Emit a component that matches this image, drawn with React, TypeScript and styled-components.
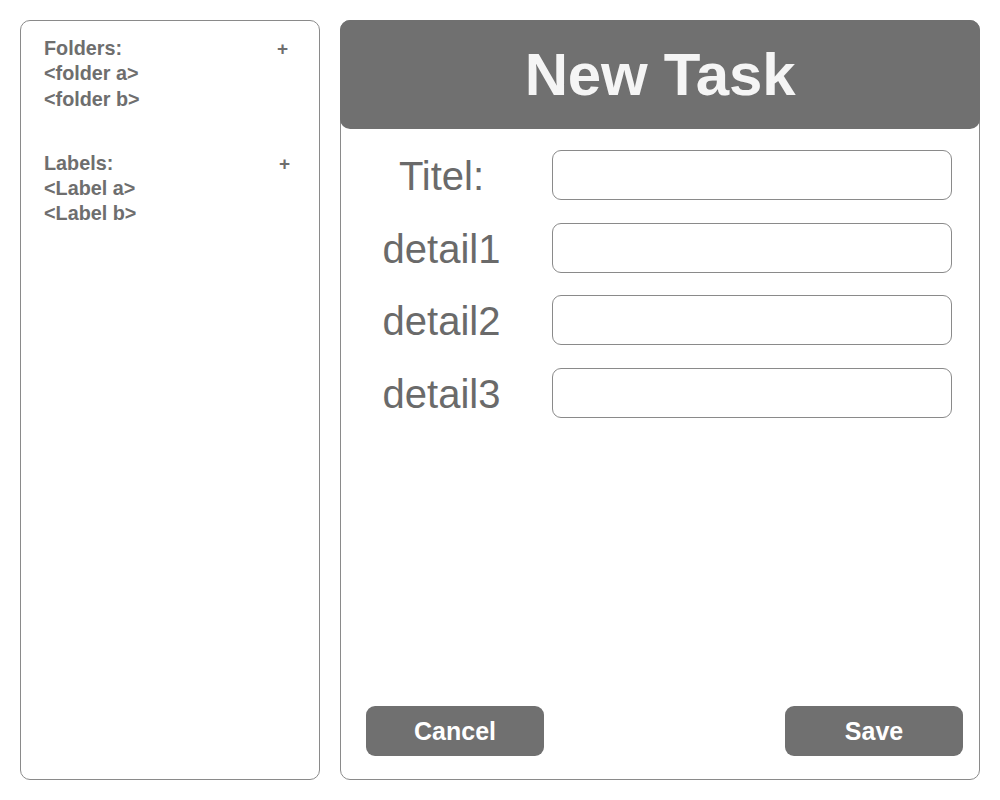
import React from "react";
import styled, { createGlobalStyle } from "styled-components";

const Global = createGlobalStyle`
  html, body { margin: 0; padding: 0; background: #ffffff; }
  body { font-family: "Liberation Sans", Arial, Helvetica, sans-serif; }
  * { box-sizing: border-box; }
`;

const Page = styled.div`
  width: 1000px;
  height: 800px;
  padding: 20px;
  display: flex;
  gap: 20px;
`;

const Sidebar = styled.aside`
  width: 300px;
  height: 760px;
  border: 1px solid #8a8a8a;
  border-radius: 10px;
  padding: 15px 30px 0 23px;
  display: flex;
  flex-direction: column;
`;

const Section = styled.div<{ $offset?: number }>`
  display: flex;
  flex-direction: column;
  margin-top: ${(p) => p.$offset ?? 0}px;
`;

const SectionHead = styled.div`
  display: flex;
  justify-content: space-between;
  align-items: center;
`;

const Item = styled.div`
  font-size: 19.8px;
  line-height: 25.3px;
  font-weight: 700;
  color: #6e6e6e;
`;

const Plus = styled.span<{ $shift?: number }>`
  font-size: 19px;
  font-weight: 700;
  color: #6e6e6e;
  line-height: 25px;
  margin-right: ${(p) => p.$shift ?? 0}px;
`;

const Main = styled.main`
  width: 640px;
  height: 760px;
  border: 1px solid #8a8a8a;
  border-radius: 10px;
  display: flex;
  flex-direction: column;
`;

const Header = styled.header`
  height: 109px;
  margin: -1px -1px 0 -1px;
  background: #707070;
  border-radius: 10px;
  display: flex;
  align-items: center;
  justify-content: center;
`;

const Title = styled.h1`
  margin: 0;
  font-size: 60px;
  font-weight: 700;
  color: #f5f5f5;
  letter-spacing: -0.2px;
  line-height: 1;
  padding-bottom: 0;
`;

const Form = styled.div`
  display: grid;
  grid-template-columns: 201px 400px;
  grid-auto-rows: 50px;
  column-gap: 10px;
  row-gap: 22.7px;
  padding-top: 21px;
`;

const Label = styled.label`
  font-size: 40px;
  color: #6a6a6a;
  text-align: center;
  align-self: center;
  line-height: 1;
  padding-top: 2px;
`;

const Input = styled.input`
  width: 100%;
  height: 50px;
  border: 1px solid #8a8a8a;
  border-radius: 9px;
  background: #fff;
  outline: none;
  font-size: 20px;
  padding: 0 12px;
  font-family: inherit;
`;

const Footer = styled.div`
  margin-top: auto;
  display: flex;
  justify-content: space-between;
  padding: 0 16px 23px 25px;
`;

const Button = styled.button`
  width: 178px;
  height: 50px;
  border: none;
  border-radius: 9px;
  background: #707070;
  color: #ffffff;
  font-family: inherit;
  font-size: 25px;
  font-weight: 700;
  padding-top: 2px;
  cursor: pointer;
`;

const fields = ["Titel:", "detail1", "detail2", "detail3"];

export default function App() {
  return (
    <>
      <Global />
      <Page>
        <Sidebar>
          <Section>
            <SectionHead>
              <Item>Folders:</Item>
              <Plus $shift={1}>+</Plus>
            </SectionHead>
            <Item>&lt;folder a&gt;</Item>
            <Item>&lt;folder b&gt;</Item>
          </Section>
          <Section $offset={39}>
            <SectionHead>
              <Item>Labels:</Item>
              <Plus $shift={-1}>+</Plus>
            </SectionHead>
            <Item>&lt;Label a&gt;</Item>
            <Item>&lt;Label b&gt;</Item>
          </Section>
        </Sidebar>
        <Main>
          <Header>
            <Title>New Task</Title>
          </Header>
          <Form>
            {fields.map((f) => (
              <React.Fragment key={f}>
                <Label>{f}</Label>
                <Input type="text" />
              </React.Fragment>
            ))}
          </Form>
          <Footer>
            <Button>Cancel</Button>
            <Button>Save</Button>
          </Footer>
        </Main>
      </Page>
    </>
  );
}
